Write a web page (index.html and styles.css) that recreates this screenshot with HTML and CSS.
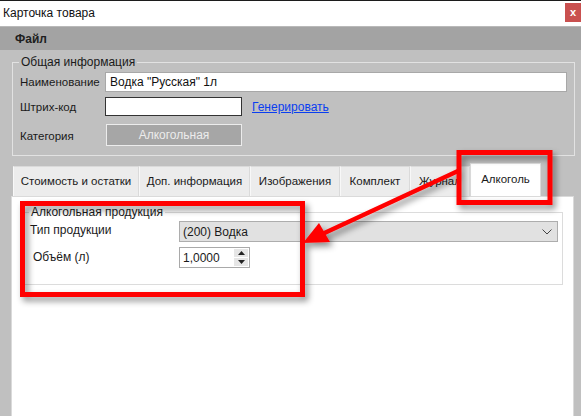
FILE: index.html
```html
<!DOCTYPE html>
<html lang="ru">
<head>
<meta charset="utf-8">
<title>Карточка товара</title>
<link rel="stylesheet" href="styles.css">
</head>
<body>
<div class="window">
  <div class="titlebar">
    <span class="title">Карточка товара</span>
    <span class="close">x</span>
  </div>
  <div class="menubar"><span class="menu-item">Файл</span></div>
  <div class="body">
    <fieldset class="group general">
      <legend>Общая информация</legend>
      <div class="form">
        <span class="label">Наименование</span>
        <div class="input wide">Водка "Русская" 1л</div>
        <span class="label">Штрих-код</span>
        <div class="barcode-row"><div class="input dark"></div><a class="link" href="#">Генерировать</a></div>
        <span class="label cat">Категория</span>
        <div class="catbtn">Алкогольная</div>
      </div>
    </fieldset>
    <div class="tabs">
      <div class="tab">Стоимость и остатки</div>
      <div class="tab">Доп. информация</div>
      <div class="tab">Изображения</div>
      <div class="tab">Комплект</div>
      <div class="tab">Журнал</div>
      <div class="tab active">Алкоголь</div>
    </div>
    <div class="panel">
      <fieldset class="group alco">
        <legend>Алкогольная продукция</legend>
        <div class="form2">
          <span class="label">Тип продукции</span>
          <div class="combo"><span>(200) Водка</span>
            <svg class="chev" width="10" height="6" viewBox="0 0 10 6"><path d="M0.5 0.5 L5 5 L9.5 0.5" fill="none" stroke="#444" stroke-width="1"/></svg>
          </div>
          <span class="label l2">Объём (л)</span>
          <div class="numeric"><span class="numval">1,0000</span>
            <div class="spin">
              <div class="spinbtn"><svg width="7" height="4" viewBox="0 0 7 4"><path d="M0 4 L3.5 0 L7 4Z" fill="#222"/></svg></div>
              <div class="spinbtn"><svg width="7" height="4" viewBox="0 0 7 4"><path d="M0 0 L3.5 4 L7 0Z" fill="#222"/></svg></div>
            </div>
          </div>
        </div>
      </fieldset>
    </div>
  </div>
  <svg class="annot" width="581" height="416" viewBox="0 0 581 416">
    <defs>
      <filter id="sh" x="-20%" y="-20%" width="140%" height="140%">
        <feDropShadow dx="3" dy="4" stdDeviation="3" flood-color="#000" flood-opacity="0.45"/>
      </filter>
    </defs>
    <g filter="url(#sh)">
      <rect x="22.5" y="203.5" width="280" height="91" fill="none" stroke="#ff0000" stroke-width="5"/>
      <rect x="459" y="152.5" width="91" height="50" fill="none" stroke="#ff0000" stroke-width="5"/>
      <line x1="458" y1="171" x2="318" y2="236" stroke="#ff0000" stroke-width="4.5"/>
      <polygon points="303,243 319,223 330,242" fill="#ff0000"/>
    </g>
  </svg>
</div>
</body>
</html>
```

FILE: styles.css
```css
* { box-sizing: border-box; }
html, body { margin: 0; padding: 0; }
body {
  width: 581px;
  height: 416px;
  overflow: hidden;
  background: #c0c0c0;
  font-family: "Liberation Sans", Arial, sans-serif;
  font-size: 11.5px;
  color: #1a1a1a;
}
.window { position: relative; width: 581px; height: 416px; display: flex; flex-direction: column; }
.titlebar {
  height: 26px;
  border-top: 1px solid #1c1c1c;
  background: #ffffff;
  display: flex;
  justify-content: space-between;
  align-items: flex-start;
  padding-left: 3px;
}
.title { font-size: 12px; line-height: 24px; color: #111; }
.close {
  margin-top: 2px;
  width: 16px;
  height: 19px;
  background: #c9504f;
  color: #fff;
  font-weight: bold;
  font-size: 11px;
  line-height: 18px;
  text-align: center;
}
.menubar {
  height: 24px;
  background: #a3a3a3;
  border-top: 1px solid #b9b9b9;
  padding-left: 15px;
  display: flex;
  align-items: center;
}
.menu-item { font-weight: bold; color: #1e1e1e; font-size: 12px; }
.body { flex: 1; display: flex; flex-direction: column; padding: 5px 6px 0 11px; }
.group {
  margin: 0;
  border: 1px solid #e2e2e2;
  padding: 0;
  min-width: 0;
}
.group legend { padding: 0 2px; margin-left: 6px; line-height: 14px; color: #1a1a1a; white-space: nowrap; font-size: 12px; }
.general { height: 101px; margin-left: 1px; }
.form {
  display: grid;
  grid-template-columns: 85px 1fr;
  grid-template-rows: 20px 19px 22px;
  row-gap: 5px;
  align-items: center;
  padding: 3px 7px 0 7px;
}
.form .label { line-height: 16px; white-space: nowrap; }
.form .label.cat { margin-top: 7px; }
.input {
  height: 20px;
  background: #fff;
  border: 1px solid #a8a8a8;
  padding: 0 4px;
  line-height: 18px;
  font-size: 12px;
  color: #111;
}
.barcode-row { display: flex; align-items: center; gap: 10px; }
.input.dark { width: 137px; height: 19px; border-color: #333; }
.link { color: #0a3ef0; text-decoration: underline; font-size: 12px; }
.catbtn {
  margin-top: 6px;
  width: 136px;
  height: 22px;
  margin-left: 1px;
  background: #a6a6a6;
  border: 1px solid #ececec;
  color: #ececec;
  text-align: center;
  line-height: 20px;
  font-size: 12px;
}
.tabs {
  display: flex;
  align-items: flex-end;
  margin-top: 8px;
  height: 32px;
  padding-left: 2px;
}
.tab {
  flex: none;
  height: 30px;
  background: #ececec;
  border: 1px solid #dadada;
  border-bottom: none;
  border-left-color: #f8f8f8;
  line-height: 29px;
  text-align: center;
  white-space: nowrap;
  color: #1a1a1a;
}
.tab:nth-child(1) { width: 126px; }
.tab:nth-child(2) { width: 111px; }
.tab:nth-child(3) { width: 90px; }
.tab:nth-child(4) { width: 70px; }
.tab:nth-child(5) { width: 60px; }
.tab.active { width: 71px; height: 33px; background: #fff; border-color: #dcdcdc; line-height: 30px; }
.panel {
  flex: 1;
  background: #fff;
  border: 1px solid #dadada;
  border-bottom: none;
  padding: 8px 10px 0 12px;
  margin-right: 1px;
}
.alco { height: 80px; border-color: #dcdcdc; }
.alco legend { margin-left: 4px; }
.form2 {
  display: grid;
  grid-template-columns: 149px 1fr;
  grid-template-rows: 21px 21px;
  row-gap: 5px;
  align-items: center;
  padding: 2px 4px 0 5px;
}
.form2 .label { line-height: 16px; margin-top: -3px; white-space: nowrap; font-size: 12px; }
.form2 .l2 { padding-left: 3px; margin-top: -1px; }
.combo {
  height: 21px;
  background: #e1e1e1;
  border: 1px solid #adadad;
  display: flex;
  align-items: center;
  justify-content: space-between;
  padding: 0 5px 0 3px;
  color: #1a1a1a;
  font-size: 12px;
}
.numeric {
  width: 71px;
  height: 21px;
  border: 1px solid #a9a9a9;
  display: flex;
  align-items: center;
  justify-content: space-between;
  padding: 0 1px 0 3px;
  color: #1a1a1a;
  font-size: 12px;
}
.spin { display: flex; flex-direction: column; gap: 1px; }
.spinbtn {
  width: 14px;
  height: 8px;
  background: #e6e6e6;
  display: flex;
  align-items: center;
  justify-content: center;
}
.annot { position: absolute; left: 0; top: 0; pointer-events: none; }
```
